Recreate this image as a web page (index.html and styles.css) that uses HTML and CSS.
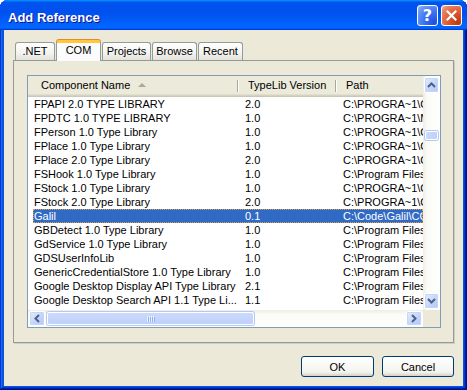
FILE: index.html
```html
<!DOCTYPE html>
<html lang="en">
<head>
    <meta charset="UTF-8">
    <title>Add Reference</title>
    <link rel="stylesheet" href="styles.css">
</head>
<body>
<div class="window">
    <div class="titlebar">
        <span class="title">Add Reference</span>
        <div class="title-buttons">
            <div class="tb-btn help">?</div>
            <div class="tb-btn close">
                <svg width="11" height="11" viewBox="0 0 11 11"><path d="M1.5 1.5 L9.5 9.5 M9.5 1.5 L1.5 9.5" stroke="#fff" stroke-width="2.2" stroke-linecap="square"/></svg>
            </div>
        </div>
    </div>

    <div class="client">
        <div class="tabs">
            <div class="tab tab-net">.NET</div>
            <div class="tab tab-com active">COM</div>
            <div class="tab tab-projects">Projects</div>
            <div class="tab tab-browse">Browse</div>
            <div class="tab tab-recent">Recent</div>
        </div>

        <div class="panel">
            <div class="listview">
                <div class="lv-main">
                    <div class="lv-body">
                        <div class="lv-header">
                            <div class="hcell col-name">Component Name <span class="sort-arrow"></span></div>
                            <div class="hcell col-version">TypeLib Version</div>
                            <div class="hcell col-path">Path</div>
                        </div>
                        <div class="lv-rows">
                            <div class="row"><span class="cell col-name">FPAPI 2.0 TYPE LIBRARY</span><span class="cell col-version">2.0</span><span class="cell col-path">C:\PROGRA~1\COMMON~1\MICROS~1\FPAPI.DLL</span></div>
                            <div class="row"><span class="cell col-name">FPDTC 1.0 TYPE LIBRARY</span><span class="cell col-version">1.0</span><span class="cell col-path">C:\PROGRA~1\MICROS~1\FPDTC.DLL</span></div>
                            <div class="row"><span class="cell col-name">FPerson 1.0 Type Library</span><span class="cell col-version">1.0</span><span class="cell col-path">C:\PROGRA~1\COMMON~1\MICROS~1\FPerson.dll</span></div>
                            <div class="row"><span class="cell col-name">FPlace 1.0 Type Library</span><span class="cell col-version">1.0</span><span class="cell col-path">C:\PROGRA~1\COMMON~1\MICROS~1\FPlace.dll</span></div>
                            <div class="row"><span class="cell col-name">FPlace 2.0 Type Library</span><span class="cell col-version">2.0</span><span class="cell col-path">C:\PROGRA~1\COMMON~1\MICROS~1\FPlace2.dll</span></div>
                            <div class="row"><span class="cell col-name">FSHook 1.0 Type Library</span><span class="cell col-version">1.0</span><span class="cell col-path">C:\Program Files\Common Files\FSHook.dll</span></div>
                            <div class="row"><span class="cell col-name">FStock 1.0 Type Library</span><span class="cell col-version">1.0</span><span class="cell col-path">C:\PROGRA~1\COMMON~1\MICROS~1\FStock.dll</span></div>
                            <div class="row"><span class="cell col-name">FStock 2.0 Type Library</span><span class="cell col-version">2.0</span><span class="cell col-path">C:\PROGRA~1\COMMON~1\MICROS~1\FStock2.dll</span></div>
                            <div class="row selected"><span class="cell col-name">Galil</span><span class="cell col-version">0.1</span><span class="cell col-path">C:\Code\Galil\COM\Galil.dll</span></div>
                            <div class="row"><span class="cell col-name">GBDetect 1.0 Type Library</span><span class="cell col-version">1.0</span><span class="cell col-path">C:\Program Files\Google\GBDetect.dll</span></div>
                            <div class="row"><span class="cell col-name">GdService 1.0 Type Library</span><span class="cell col-version">1.0</span><span class="cell col-path">C:\Program Files\Google\GdService.dll</span></div>
                            <div class="row"><span class="cell col-name">GDSUserInfoLib</span><span class="cell col-version">1.0</span><span class="cell col-path">C:\Program Files\Google\GDSUserInfo.dll</span></div>
                            <div class="row"><span class="cell col-name">GenericCredentialStore 1.0 Type Library</span><span class="cell col-version">1.0</span><span class="cell col-path">C:\Program Files\Google\GoogleCredential.dll</span></div>
                            <div class="row"><span class="cell col-name">Google Desktop Display API Type Library</span><span class="cell col-version">2.1</span><span class="cell col-path">C:\Program Files\Google\GoogleDesktopDisplay.dll</span></div>
                            <div class="row"><span class="cell col-name">Google Desktop Search API 1.1 Type Li...</span><span class="cell col-version">1.1</span><span class="cell col-path">C:\Program Files\Google\GoogleDesktopAPI2.dll</span></div>
                        </div>
                    </div>
                    <div class="vscroll">
                        <div class="sb-btn">
                            <svg width="9" height="6" viewBox="0 0 9 6"><path d="M1 5 L4.5 1.5 L8 5" fill="none" stroke="#4D6185" stroke-width="2"/></svg>
                        </div>
                        <div class="vtrack">
                            <div class="vthumb"></div>
                        </div>
                        <div class="sb-btn">
                            <svg width="9" height="6" viewBox="0 0 9 6"><path d="M1 1 L4.5 4.5 L8 1" fill="none" stroke="#4D6185" stroke-width="2"/></svg>
                        </div>
                    </div>
                </div>
                <div class="lv-bottom">
                    <div class="hscroll">
                        <div class="sb-btn">
                            <svg width="6" height="9" viewBox="0 0 6 9"><path d="M5 1 L1.5 4.5 L5 8" fill="none" stroke="#4D6185" stroke-width="2"/></svg>
                        </div>
                        <div class="htrack">
                            <div class="hthumb">
                                <svg width="8" height="6" viewBox="0 0 8 6"><path d="M0.5 0 V6 M2.5 0 V6 M4.5 0 V6 M6.5 0 V6" stroke="#EEF4FE" stroke-width="1"/><path d="M1.5 1 V7 M3.5 1 V7 M5.5 1 V7 M7.5 1 V7" stroke="#8CB0F8" stroke-width="1"/></svg>
                            </div>
                        </div>
                        <div class="sb-btn">
                            <svg width="6" height="9" viewBox="0 0 6 9"><path d="M1 1 L4.5 4.5 L1 8" fill="none" stroke="#4D6185" stroke-width="2"/></svg>
                        </div>
                    </div>
                    <div class="corner"></div>
                </div>
            </div>
        </div>

        <div class="buttons">
            <button class="btn btn-ok">OK</button>
            <button class="btn btn-cancel">Cancel</button>
        </div>
    </div>
</div>
</body>
</html>
```

FILE: styles.css
```css
body {
    margin: 0;
    background: #fff;
    font-family: "Liberation Sans", Arial, sans-serif;
    font-size: 11px;
}
.window {
    width: 467px;
    height: 390px;
    box-sizing: border-box;
    display: flex;
    flex-direction: column;
    padding: 0 4px 4px;
    border-radius: 8px 8px 0 0;
    background: #0855dd;
    box-shadow: inset -1px -1px #00138c, inset 1px 1px #0831d9, inset -2px -2px #001ea0, inset 2px 2px #166aee, inset -3px -3px #003bda, inset 3px 3px #0855dd;
}

/* title bar */
.titlebar {
    height: 30px;
    margin: 0 -4px;
    padding: 1px 5px 0 8px;
    box-sizing: border-box;
    display: flex;
    align-items: center;
    justify-content: space-between;
    border-radius: 8px 8px 0 0;
    background: linear-gradient(180deg, #0997ff, #0053ee 8%, #0050ee 40%, #0066ff 88%, #0066ff 93%, #005bff 95%, #003dd7 96%, #003dd7);
}
.title {
    margin-top: 3px;
    color: #fff;
    font-family: "Liberation Sans", Arial, sans-serif;
    font-weight: bold;
    font-size: 13px;
    text-shadow: 1px 1px #0f1089;
}
.title-buttons {
    display: flex;
    gap: 3px;
}
.tb-btn {
    width: 21px;
    height: 21px;
    box-sizing: border-box;
    border: 1px solid #fff;
    border-radius: 3px;
    display: flex;
    align-items: center;
    justify-content: center;
    color: #fff;
}
.help {
    background: radial-gradient(circle at 85% 85%, #1f4fe0 0, #3d72f2 45%, #6b97f7 80%, #a4c1fb 100%);
    font-family: "DejaVu Sans", sans-serif;
    font-weight: bold;
    font-size: 16px;
}
.close {
    background: radial-gradient(circle at 85% 85%, #c0380e 0, #dd5a33 45%, #e7835e 80%, #f5b9a0 100%);
}

/* client area */
.client {
    flex: 1;
    background: #ece9d8;
    padding: 10px 9px 9px 9px;
    display: flex;
    flex-direction: column;
}
.tabs {
    display: flex;
    align-items: flex-end;
    gap: 1px;
    margin-left: 2px;
    height: 20px;
    position: relative;
    z-index: 1;
}
.tab {
    height: 18px;
    box-sizing: border-box;
    border: 1px solid #919b9c;
    border-bottom: none;
    border-radius: 3px 3px 0 0;
    background: linear-gradient(#ffffff, #f3f3ef 60%, #e3e2da);
    text-align: center;
    line-height: 17px;
}
.tab-net { width: 40px; }
.tab-com { width: 45px; }
.tab-projects { width: 49px; }
.tab-browse { width: 45px; }
.tab-recent { width: 45px; }
.tab.active {
    height: 21px;
    margin-bottom: -1px;
    background: #fcfcfe;
    border-top: 3px solid #ffc83c;
    box-shadow: 0 -1px 0 #e68b2c;
    line-height: 15px;
}
.panel {
    height: 283px;
    box-sizing: border-box;
    border: 1px solid #919b9c;
    box-shadow: 1px 1px 0 #d0cebf;
    background: #ece9d8;
    padding: 14px 12px 14px 13px;
    display: flex;
}

/* list view */
.listview {
    flex: 1;
    border: 1px solid #7f9db9;
    background: #fff;
    display: flex;
    flex-direction: column;
    overflow: hidden;
}
.lv-main {
    flex: 1;
    display: flex;
    min-height: 0;
}
.lv-body {
    flex: 1;
    overflow: hidden;
}
.lv-header {
    height: 21px;
    box-sizing: border-box;
    display: flex;
    background: #ebeadb;
    box-shadow: inset 0 -1px #cbc7b8, inset 0 -2px #d6d2c2, inset 0 -3px #e2decd;
    padding-bottom: 3px;
}
.hcell {
    height: 18px;
    line-height: 19px;
    box-sizing: border-box;
    white-space: nowrap;
    position: relative;
}
.hcell.col-name {
    width: 210px;
    padding-left: 13px;
}
.hcell.col-version {
    width: 98px;
    padding-left: 10px;
}
.hcell.col-path {
    flex: 1;
    padding-left: 10px;
}
.hcell.col-name::after, .hcell.col-version::after {
    content: "";
    position: absolute;
    right: 0;
    top: 4px;
    height: 12px;
    width: 1px;
    background: #aca899;
    box-shadow: 1px 0 #fff;
}
.sort-arrow {
    display: inline-block;
    width: 0;
    height: 0;
    margin-left: 5px;
    vertical-align: 2px;
    border-left: 4px solid transparent;
    border-right: 4px solid transparent;
    border-bottom: 4px solid #aca899;
}
.row {
    display: flex;
    height: 14px;
    line-height: 14px;
    margin-left: 5px;
    box-sizing: border-box;
    white-space: nowrap;
}
.cell {
    overflow: hidden;
    box-sizing: border-box;
}
.cell.col-name {
    width: 205px;
    padding-left: 1px;
}
.cell.col-version {
    width: 98px;
    padding-left: 7px;
}
.cell.col-path {
    flex: 1;
    padding-left: 7px;
}
.row.selected {
    background: #316ac5;
    color: #fff;
    outline: 1px dotted #d9a043;
    outline-offset: -1px;
}

/* scroll bars */
.vscroll {
    width: 17px;
    box-sizing: border-box;
    padding: 1px;
    display: flex;
    flex-direction: column;
    background: linear-gradient(90deg, #eeede5, #fbfbf8 25%, #fefefb);
}
.sb-btn {
    width: 15px;
    height: 16px;
    box-sizing: border-box;
    border: 1px solid #fff;
    border-radius: 2px;
    background: linear-gradient(135deg, #e6eefc, #c1d3fb 60%, #b4c8f6);
    box-shadow: inset 0 0 0 1px #c6d6fb;
    display: flex;
    align-items: center;
    justify-content: center;
}
.vtrack {
    flex: 1;
}
.vthumb {
    margin-top: 38px;
    height: 9px;
    box-sizing: border-box;
    border: 1px solid #fff;
    border-radius: 2px;
    background: linear-gradient(90deg, #cad9fd, #bfd0fa);
    box-shadow: 0 0 0 1px #b5c8f4;
    margin-left: 1px;
    margin-right: 1px;
}
.lv-bottom {
    height: 17px;
    display: flex;
}
.hscroll {
    flex: 1;
    box-sizing: border-box;
    padding: 1px;
    display: flex;
    background: linear-gradient(180deg, #eeede5, #fbfbf8 25%, #fefefb);
}
.hscroll .sb-btn {
    width: 16px;
    height: 15px;
}
.htrack {
    flex: 1;
    padding: 0 2px;
}
.hthumb {
    width: 207px;
    height: 13px;
    margin-top: 1px;
    box-sizing: border-box;
    border: 1px solid #fff;
    border-radius: 2px;
    background: linear-gradient(180deg, #cad9fd, #bfd0fa);
    box-shadow: 0 0 0 1px #b5c8f4;
    display: flex;
    align-items: center;
    justify-content: center;
}
.corner {
    width: 17px;
    background: #ece9d8;
}

/* dialog buttons */
.buttons {
    margin-top: 13px;
    display: flex;
    justify-content: flex-end;
    gap: 8px;
}
.btn {
    height: 21px;
    box-sizing: border-box;
    border: 1px solid #003c74;
    border-radius: 3px;
    background: linear-gradient(180deg, #ffffff, #f3f3ef 80%, #d6d0c5);
    font-family: "Liberation Sans", Arial, sans-serif;
    font-size: 11px;
    color: #000;
    padding: 0;
}
.btn-ok { width: 73px; }
.btn-cancel { width: 72px; }
```
